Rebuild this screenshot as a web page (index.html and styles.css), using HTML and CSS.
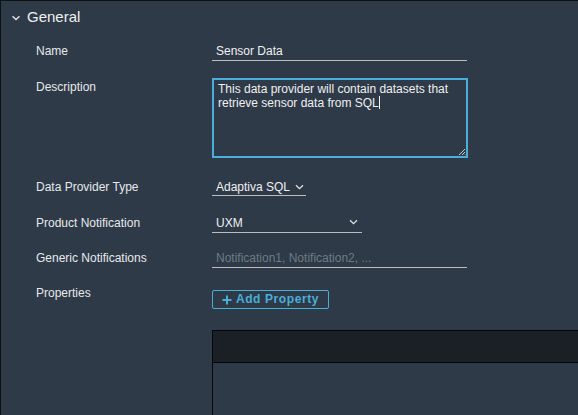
FILE: index.html
```html
<!DOCTYPE html>
<html>
<head>
<meta charset="utf-8">
<link rel="stylesheet" href="styles.css">
</head>
<body>
<div class="page">
  <div class="section-head">
    <svg class="caret" width="10" height="8" viewBox="0 0 10 8"><path d="M1.5 2.2 L5 5.6 L8.5 2.2" fill="none" stroke="#dfe3e6" stroke-width="1.4"/></svg>
    <span class="title">General</span>
  </div>
  <div class="form">
    <div class="row r-name">
      <div class="label">Name</div>
      <div class="field wide"><span class="val">Sensor Data</span></div>
    </div>
    <div class="row r-desc">
      <div class="label top">Description</div>
      <div class="textarea">This data provider will contain datasets that retrieve sensor data from SQL<span class="cursor"></span>
        <svg class="grip" width="8" height="8" viewBox="0 0 8 8"><path d="M7 1 L1 7 M7 4 L4 7 M7 6.5 L6.5 7" stroke="#c9cdd1" stroke-width="1"/></svg>
      </div>
    </div>
    <div class="row r-type">
      <div class="label">Data Provider Type</div>
      <div class="field select s1"><span class="val">Adaptiva SQL</span>
        <svg class="chev" width="9" height="6" viewBox="0 0 9 6"><path d="M1 1.2 L4.5 4.6 L8 1.2" fill="none" stroke="#dfe3e6" stroke-width="1.3"/></svg>
      </div>
    </div>
    <div class="row r-prod">
      <div class="label">Product Notification</div>
      <div class="field select s2"><span class="val">UXM</span>
        <svg class="chev" width="9" height="6" viewBox="0 0 9 6"><path d="M1 1.2 L4.5 4.6 L8 1.2" fill="none" stroke="#dfe3e6" stroke-width="1.3"/></svg>
      </div>
    </div>
    <div class="row r-gen">
      <div class="label">Generic Notifications</div>
      <div class="field wide"><span class="ph">Notification1, Notification2, ...</span></div>
    </div>
    <div class="row r-props">
      <div class="label">Properties</div>
      <div class="btn"><svg class="plus" width="10" height="10" viewBox="0 0 10 10"><path d="M5 0.5 V9.5 M0.5 5 H9.5" stroke="#49afd9" stroke-width="2"/></svg><span>Add Property</span></div>
    </div>
    <div class="table">
      <div class="thead"></div>
      <div class="tbody"></div>
    </div>
  </div>
</div>
</body>
</html>
```

FILE: styles.css
```css
html, body {
  margin: 0;
  padding: 0;
  background: #2e3a47;
}
.page {
  width: 577px;
  height: 414px;
  border-top: 1px solid #0e1115;
  border-left: 1px solid #0e1115;
  background: #2e3a47;
  font-family: "Liberation Sans", Arial, sans-serif;
  color: #e6e9ec;
  overflow: hidden;
}
.section-head {
  height: 32px;
  display: flex;
  align-items: center;
  padding-left: 10px;
}
.caret {
  margin-right: 6px;
  margin-top: 1px;
}
.title {
  font-size: 15px;
  color: #eef0f2;
  line-height: 32px;
}
.form {
  padding-left: 35px;
  padding-top: 9px;
}
.row {
  display: flex;
  align-items: flex-start;
}
.label {
  width: 176px;
  font-size: 12px;
  line-height: 19px;
  flex: none;
}
.label.top {
  line-height: 14px;
  padding-top: 2px;
}
.field {
  height: 18px;
  border-bottom: 1px solid #b8bdc2;
  font-size: 12px;
  line-height: 19px;
  padding-left: 4px;
  box-sizing: content-box;
  display: flex;
  align-items: center;
  position: relative;
}
.field.wide { width: 251px; }
.val { color: #eef0f2; }
.ph { color: #6d7a86; }
.select.s1 { width: 90px; height: 15px; padding-top: 1px; }
.select.s2 { width: 146px; }
.chev {
  margin-left: auto;
  margin-right: 4px;
  margin-top: -2px;
}
.s1 .chev { margin-left: 5px; margin-right: 0; }
.r-desc { margin-top: 17px; }
.textarea {
  width: 244px;
  height: 70px;
  border: 2px solid #49afd9;
  padding: 3px 4px;
  font-size: 12px;
  line-height: 13px;
  color: #eef0f2;
  position: relative;
}
.cursor {
  display: inline-block;
  width: 1px;
  height: 13px;
  background: #eef0f2;
  vertical-align: -2px;
}
.grip {
  position: absolute;
  right: 0;
  bottom: 0;
}
.r-type { margin-top: 21px; }
.r-type .label { line-height: 17px; }
.r-prod { margin-top: 18px; }
.r-gen { margin-top: 16px; }
.r-props { margin-top: 15px; }
.r-props .label { padding-top: 1px; }
.btn {
  margin-top: 7px;
  width: 115px;
  height: 17px;
  border: 1px solid #49afd9;
  border-radius: 2px;
  color: #49afd9;
  font-size: 12px;
  font-weight: bold;
  letter-spacing: 0.6px;
  line-height: 17px;
  display: flex;
  align-items: center;
  justify-content: center;
  gap: 4px;
}
.plus {
  flex: none;
}
.table {
  margin-top: 21px;
  margin-left: 176px;
  width: 400px;
  border-left: 1px solid #050607;
  border-top: 1px solid #050607;
}
.thead {
  height: 31px;
  background: #1b2027;
  border-bottom: 1px solid #050607;
}
.tbody {
  height: 60px;
}
```
